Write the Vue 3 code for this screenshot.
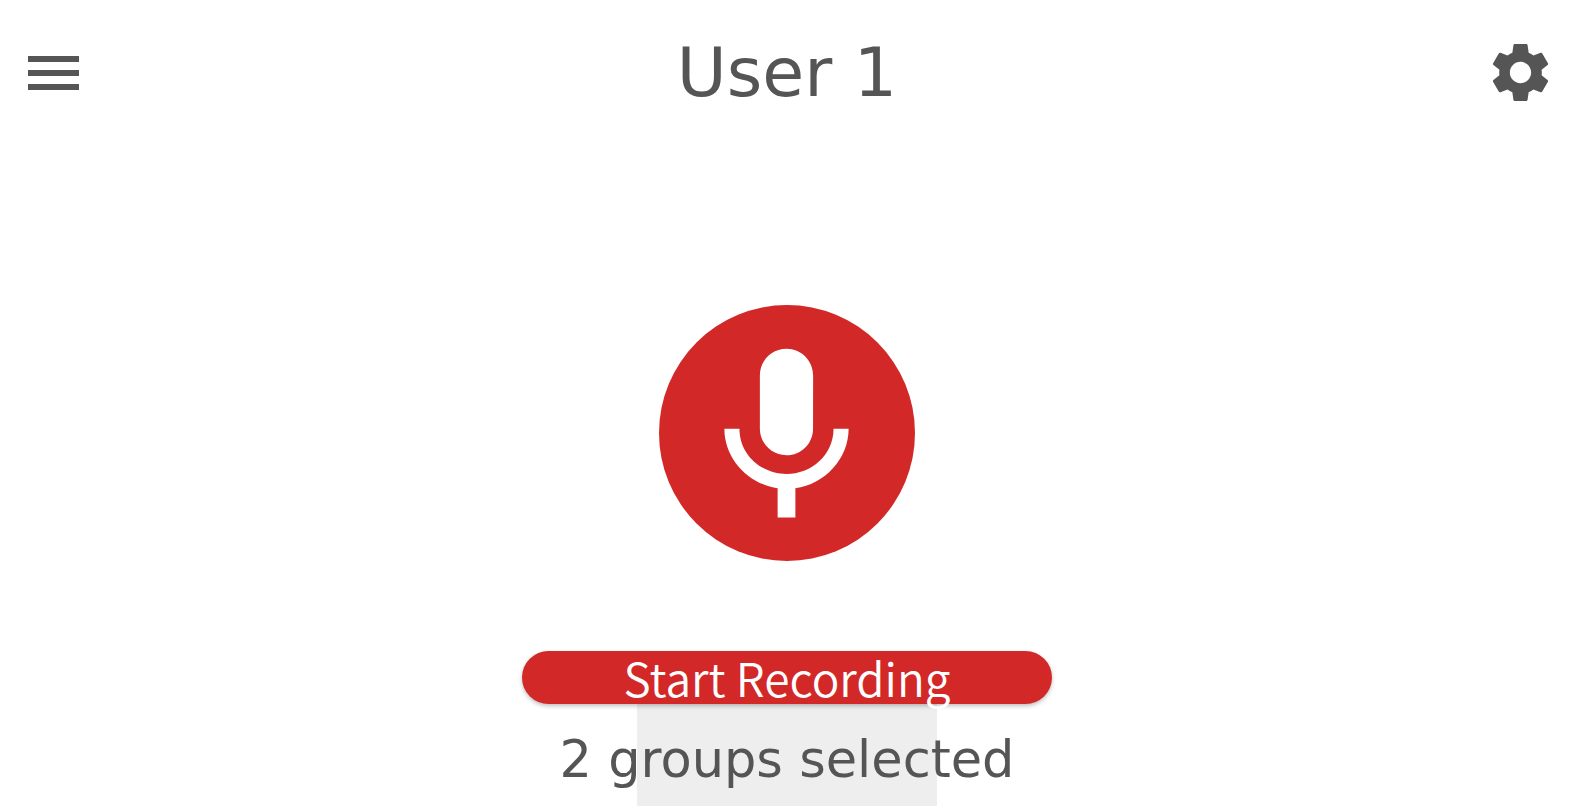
<script setup>
const title = 'User 1'
</script>

<template>
  <div class="page">
    <header class="top">
      <button class="burger" aria-label="Menu"><span></span><span></span><span></span></button>
      <h1 class="title">{{ title }}</h1>
      <svg class="gear" viewBox="0 0 24 24"><path fill="#555" d="M19.14 12.94c.04-.3.06-.61.06-.94 0-.32-.02-.64-.07-.94l2.03-1.58c.18-.14.23-.41.12-.61l-1.92-3.32c-.12-.22-.37-.29-.59-.22l-2.39.96c-.5-.38-1.03-.7-1.62-.94l-.36-2.54c-.04-.24-.24-.41-.48-.41h-3.84c-.24 0-.43.17-.47.41l-.36 2.54c-.59.24-1.13.57-1.62.94l-2.39-.96c-.22-.08-.47 0-.59.22L2.74 8.87c-.12.21-.08.47.12.61l2.03 1.58c-.05.3-.09.63-.09.94s.02.64.07.94l-2.03 1.58c-.18.14-.23.41-.12.61l1.92 3.32c.12.22.37.29.59.22l2.39-.96c.5.38 1.03.7 1.62.94l.36 2.54c.05.24.24.41.48.41h3.84c.24 0 .44-.17.47-.41l.36-2.54c.59-.24 1.13-.56 1.62-.94l2.39.96c.22.08.47 0 .59-.22l1.92-3.32c.12-.22.07-.47-.12-.61l-2.01-1.58zM12 15.6c-1.98 0-3.6-1.62-3.6-3.6s1.62-3.6 3.6-3.6 3.6 1.62 3.6 3.6-1.62 3.6-3.6 3.6z"/></svg>
    </header>
    <main class="main">
      <div class="circle">
        <svg class="mic" viewBox="0 0 24 24"><path fill="#fff" d="M12 14c1.66 0 2.99-1.34 2.99-3L15 5c0-1.66-1.34-3-3-3S9 3.34 9 5v6c0 1.66 1.34 3 3 3zm5.3-3c0 3-2.54 5.1-5.3 5.1S6.7 14 6.7 11H5c0 3.41 2.72 6.23 6 6.72V21h2v-3.28c3.28-.48 6-3.3 6-6.72h-1.7z"/></svg>
      </div>
      <button class="record">Start Recording</button>
      <div class="groups"><span>2 groups selected</span></div>
    </main>
  </div>
</template>

<style>
html, body { margin: 0; overflow: hidden; background: #fff; }
</style>

<style scoped>
.page {
  height: 806px;
  box-sizing: border-box;
  padding-right: 5px;
  display: flex;
  flex-direction: column;
  font-family: "DejaVu Sans", sans-serif;
  color: #555;
}
.top {
  height: 145px;
  flex: none;
  display: flex;
  align-items: center;
  justify-content: space-between;
  padding: 0 18.5px 0 28px;
  position: relative;
}
.burger {
  width: 51px;
  display: flex;
  flex-direction: column;
  gap: 8px;
  padding: 0;
  border: 0;
  background: none;
}
.burger span { display: block; height: 6px; background: #555; }
.title {
  position: absolute;
  left: 0;
  right: 0;
  text-align: center;
  margin: 0;
  font-size: 68.2px;
  font-weight: 400;
  line-height: 80px;
}
.gear { width: 71px; height: 71px; }
.main {
  flex: 1;
  min-height: 0;
  display: flex;
  flex-direction: column;
  align-items: center;
  padding-top: 160px;
}
.circle {
  width: 256px;
  height: 256px;
  border-radius: 50%;
  background: #d32828;
  box-sizing: border-box;
  padding: 8px 2px 0 0;
  display: flex;
  align-items: center;
  justify-content: center;
  flex: none;
}
.mic { width: 213px; height: 213px; }
.record {
  margin-top: 90px;
  width: 530px;
  height: 53px;
  flex: none;
  padding: 0;
  border: 0;
  border-radius: 27px;
  background: #d32828;
  color: #fff;
  font-family: "Noto Sans CJK JP", "Noto Sans", sans-serif;
  font-weight: 350;
  font-size: 46px;
  line-height: 53px;
  white-space: nowrap;
  box-shadow: 0 2px 4px rgba(0,0,0,.25);
  position: relative;
}
.groups {
  width: 300px;
  flex: 1;
  background: #eee;
  display: flex;
  justify-content: center;
  font-size: 51px;
  line-height: 112px;
  white-space: nowrap;
}
</style>
